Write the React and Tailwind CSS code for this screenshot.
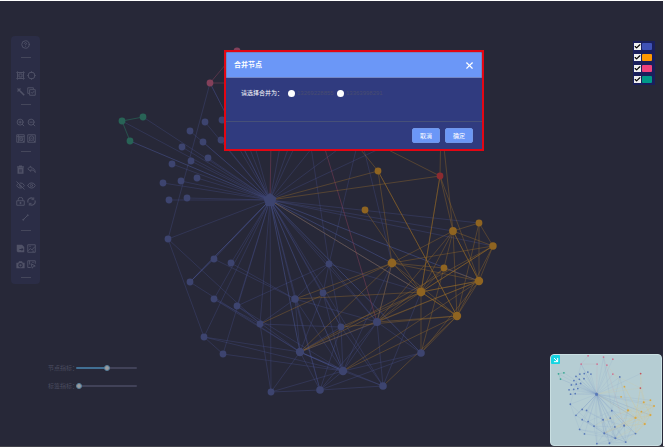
import React from "react";
import {
  CircleHelp, ZoomIn, ZoomOut, EyeOff, Eye, X, ArrowDownRight, Check,
} from "lucide-react";

const NODES = {
  hub: [270, 200, "blue", 6],
  g1: [122, 121, "green"], g2: [143, 117, "green"], g3: [130, 141, "green"],
  p1: [210, 83, "pink"], p2: [237, 51, "pink"], p3: [297, 56, "pink"], p4: [333, 64, "pink"],
  p5: [272, 83, "pink"], p6: [310, 87, "pink"], p7: [333, 122, "pink"],
  b1: [205, 122, "blue"], b2: [222, 120, "blue"], b3: [190, 131, "blue"], b4: [203, 142, "blue"],
  b5: [221, 140, "blue"], b6: [182, 147, "blue"], b7: [191, 161, "blue"], b8: [208, 158, "blue"],
  b9: [172, 164, "blue"], b10: [163, 183, "blue"], b11: [181, 181, "blue"], b12: [197, 178, "blue"],
  b13: [169, 200, "blue"], b14: [187, 198, "blue"], b15: [236, 114, "blue"], b16: [248, 122, "blue"],
  b17: [360, 133, "blue"],
  c1: [168, 239, "blue"], c2: [214, 259, "blue"], c3: [231, 263, "blue"], c4: [190, 282, "blue"],
  c5: [214, 299, "blue"], c6: [237, 306, "blue"], c7: [295, 299, "blue", 3.8], c8: [323, 293, "blue"],
  c9: [329, 264, "blue"], c10: [260, 324, "blue"], c11: [204, 337, "blue"], c12: [223, 354, "blue"],
  c13: [300, 352, "blue", 4.2], c14: [271, 392, "blue"], c15: [320, 390, "blue", 3.8], c16: [341, 327, "blue"],
  c17: [377, 322, "blue", 4], c18: [343, 371, "blue", 4.2], c19: [383, 386, "blue", 3.8], c20: [421, 353, "blue", 3.8],
  o1: [378, 171, "orange"], o2: [365, 210, "orange"], o3: [453, 231, "orange", 3.9], o4: [479, 223, "orange"],
  o5: [493, 246, "orange", 3.7], o6: [392, 263, "orange", 4.4], o7: [444, 268, "orange"], o8: [421, 292, "orange", 4.4],
  o9: [479, 281, "orange", 4.2], o10: [457, 316, "orange", 4.2],
  r1: [440, 176, "red"], r2: [441, 120, "red"],
};

const LINKS = {
  blue: `hub-g1 hub-g2 hub-b1 hub-b2 hub-b3 hub-b4 hub-b5 hub-b6 hub-b7 hub-b8 hub-b9 hub-b10 hub-b11
    hub-b12 hub-b13 hub-b14 hub-b15 hub-b16 hub-b17 hub-p1 hub-p3 hub-p4 hub-p6 hub-p7 hub-c1 hub-c2 hub-c3 hub-c4
    hub-c5 hub-c6 hub-c7 hub-c8 hub-c9 hub-c10 hub-c11 hub-c12 hub-c14 hub-c15 hub-c16 hub-c17
    hub-c19 hub-o4 hub-o3 hub-o5 hub-r2 p1-c1 p1-hub b17-o6 b17-c9 p3-c9 c1-c11 c1-c10 c2-c7 c3-c7 c4-c2 c4-c13
    c5-c10 c6-c9 c6-c13 c6-c18 c10-c7 c10-c16 c10-c14 c11-c13 c11-c18 c11-c12 c12-c18 c7-c13 c7-c17
    c7-c15 c7-c18 c8-c13 c8-c16 c8-c18 c9-c7 c9-c17 c9-c16 c9-o8 c9-c8 c16-c18 c16-c13 c16-c15 c16-c19 c17-c18
    c17-c13 c17-c20 c17-c19 c17-c15 c13-c14 c13-c15 c13-c18 c13-c19 c14-c15 c14-c18 c15-c18 c15-c19
    c15-c20 c18-c19 c18-c20 c19-o8 o6-c17 o6-c18 c5-c13`,
  strong: "hub-g3 hub-o6 hub-o8 hub-o9 hub-c13 hub-c18 hub-c20 c13-c18 hub-c4",
  green: "g1-g2 g1-g3",
  pink: "p1-p2 p1-p5 p5-hub p3-c17",
  orange: `hub-o1 hub-r1 hub-o8 o1-o6 o1-o10 o1-p6 o2-o8 r1-o8 r1-o9 r1-o3 r1-r2 r1-p7 r2-o3 o3-o4 o3-o5
    o3-o6 o3-o7 o3-o8 o3-o9 o3-o10 o3-c17 o4-o5 o4-o9 o4-o10 o5-o6 o5-o8 o5-o9 o5-o10 o5-c13 o6-o7 o6-o8
    o6-o9 o6-o10 o6-c7 o6-c10 o6-c13 o6-c17 o7-o8 o7-c17 o7-c20 o7-o9 o8-o9 o8-o10 o8-c7 o8-c13 o8-c16 o8-c17
    o8-c20 o9-o10 o9-c17 o9-c20 o9-c18 o9-c13 o10-c17 o10-c20 o10-c19 o10-c18 o10-c16`,
  gold: "o5-o8 o9-o8 o3-o9 r1-o8 o8-o10 o1-o10",
};

const DARK = {
  nodes: { blue: "#3d446f", green: "#286356", pink: "#83405a", orange: "#8f6421", red: "#8c2b30" },
  links: { blue: ["#444c84", 0.38], strong: ["#4b5797", 0.5], green: ["#286356", 0.7], pink: ["#83405a", 0.5], orange: ["#94692a", 0.42], gold: ["#a07124", 0.4] },
};
const LIGHT = {
  nodes: { blue: "#5878b8", green: "#35a890", pink: "#cf6f91", orange: "#d9a741", red: "#c4525d" },
  links: { blue: ["#6f8cc0", 0.2], strong: ["#6480bd", 0.35], green: ["#50ad9c", 0.4], pink: ["#c795ad", 0.3], orange: ["#d8c48c", 0.3], gold: ["#d8c07c", 0.35] },
};

function Graph({ palette, viewBox, className, small }) {
  return (
    <svg viewBox={viewBox} className={className} aria-hidden="true">
      {Object.entries(LINKS).map(([kind, list]) => (
        <g key={kind} stroke={palette.links[kind][0]} strokeOpacity={palette.links[kind][1]} strokeWidth={small ? 2 : 1}>
          {list.trim().split(/\s+/).map((pair, i) => {
            const [a, b] = pair.split("-").map((id) => NODES[id]);
            return <line key={i} x1={a[0]} y1={a[1]} x2={b[0]} y2={b[1]} />;
          })}
        </g>
      ))}
      {Object.entries(NODES).map(([id, [x, y, color, r = 3.4]]) =>
        id === "hub" ? (
          <polygon key={id} fill={palette.nodes.blue} points="270,193 276.5,198 274,206 266,206 263.5,198" />
        ) : (
          <circle key={id} cx={x} cy={y} r={r} fill={palette.nodes[color]} />
        )
      )}
    </svg>
  );
}

function Glyph({ children, solid }) {
  return (
    <svg viewBox="0 0 24 24" className="size-[9px]" fill={solid ? "currentColor" : "none"} stroke={solid ? "none" : "currentColor"} strokeWidth="2.5">
      {children}
    </svg>
  );
}
const Frame = () => <Glyph><path d="M4 4h16v16H4zM1 4h3V1M20 1v3h3M1 20h3v3M20 23v-3h3M8 8h8v8H8z" /></Glyph>;
const Ring = () => <Glyph><circle cx="12" cy="12" r="9" /><path d="M12 1v4M12 19v4M1 12h4M19 12h4" /></Glyph>;
const Wand = () => <Glyph><path d="M11 11l11 11" strokeWidth="4" /><path d="M8 3v10M3 8h10M4 4l8 8M12 4L4 12" /></Glyph>;
const CopyCheck = () => <Glyph><path d="M17 6V2H2v15h4M7 7h15v15H7zM11 14l3 3 5-6" /></Glyph>;
const BoxIn = () => <Glyph><path d="M2 2h20v20H2zM2 7h20M7 2v20M17 17l5 5" /><circle cx="13" cy="13" r="5" /><path d="M13 11v4M11 13h4" /></Glyph>;
const BoxOut = () => <Glyph><path d="M2 2h20v20H2zM4 20l4-4M17 17l5 5" /><circle cx="12" cy="11" r="6" /><path d="M9 11h6" /></Glyph>;
const Trash = () => <Glyph solid><path fillRule="evenodd" d="M8 1h8v2h5v4H3V3h5zM4 8h16v15H4zM8 11v9h1.500v-9zM11.300 11v9h1.500v-9zM14.600 11v9h1.500v-9z" /></Glyph>;
const Undo = () => <Glyph><path d="M10 3L2 10l8 7v-4c6 0 9 2 12 7 0-8-5-12-12-13z" /></Glyph>;
const Padlock = () => <Glyph><path d="M2 10h20v12H2zM6 10V6a6 5 0 0112 0v4M12 13v6M9 16h6" /></Glyph>;
const Cycle = () => <Glyph><path d="M3 15A9 9 0 0117 4.500M21 9A9 9 0 017 19.500" strokeWidth="3" /><path d="M18 1v6h-6M6 23v-6h6" /></Glyph>;
const Line = () => <Glyph><path d="M6 18L18 6" /><circle cx="6" cy="18" r="1.500" /><circle cx="18" cy="6" r="1.500" /></Glyph>;
const Export = () => <Glyph solid><path fillRule="evenodd" d="M2 2h14l6 6v14H5l-3-3zM9 13v3h6v3l5-5-5-4v3z" /></Glyph>;
const Picture = () => <Glyph><path d="M2 2h20v20H2zM3 18l6-6 4 4 8-9M6 6h4M14 19h5" /></Glyph>;
const Camera = () => <Glyph solid><path fillRule="evenodd" d="M8 3h8l2 4h5v15H1V7h5zM12 8a6 6 0 100 12 6 6 0 000-12zM12 11a3 3 0 110 6 3 3 0 010-6z" /></Glyph>;
const Pick = () => <Glyph><path d="M10 20H2V2h20v8M7 2v10M11 10l3 12 3-5 5-1zM14 6h4" /></Glyph>;

const TOOLS = [
  [["帮助", CircleHelp]], null,
  [["框选", Frame], ["圈选", Ring]],
  [["魔棒", Wand], ["全选", CopyCheck]], null,
  [["放大", ZoomIn], ["缩小", ZoomOut]],
  [["区域放大", BoxIn], ["区域缩小", BoxOut]], null,
  [["删除", Trash], ["撤销", Undo]],
  [["隐藏", EyeOff], ["显示", Eye]],
  [["锁定", Padlock], ["刷新", Cycle]],
  [["连线", Line]], null,
  [["导出", Export], ["图片", Picture]],
  [["截图", Camera], ["选取", Pick]], null,
];

function Toolbar() {
  return (
    <nav className="h-[248px] w-[29px] rounded-sm bg-[#2b2d46] text-[#505267]">
      {TOOLS.map((row, i) =>
        row ? (
          <div key={i} className="flex h-4 items-center justify-center gap-0.5">
            {row.map(([name, Icon]) => (
              <button key={name} type="button" aria-label={name} className="flex size-[9px] items-center justify-center">
                <Icon className="size-[9px]" strokeWidth={2.5} />
              </button>
            ))}
          </div>
        ) : (
          <div key={i} className="flex h-[15px] justify-center pt-[5px]">
            <span className="h-px w-2.5 bg-[#45475b]" />
          </div>
        )
      )}
    </nav>
  );
}

function Legend() {
  const items = [["蓝色", "bg-[#3f51b5]"], ["橙色", "bg-[#ff9800]"], ["粉色", "bg-[#f0427c]"], ["绿色", "bg-[#009988]"]];
  return (
    <div className="flex flex-col gap-1 bg-[#1a1f5c] py-0.5 pr-[3px] pl-px">
      {items.map(([name, color]) => (
        <label key={name} className="flex items-center gap-px">
          <span className="relative flex">
            <input type="checkbox" defaultChecked aria-label={name} className="peer size-[7px] appearance-none bg-[#eeeeee]" />
            <Check className="pointer-events-none absolute inset-0 hidden size-[7px] text-black peer-checked:block" strokeWidth={4} />
          </span>
          <span className={"h-[7px] w-2.5 rounded-[1px] " + color} />
        </label>
      ))}
    </div>
  );
}

function Slider({ id, label, value }) {
  return (
    <div className="flex h-[18px] items-center">
      <label htmlFor={id} className="w-7 text-[6px] whitespace-nowrap text-[#4b4d60]">{label}</label>
      <input
        id={id}
        type="range"
        defaultValue={value}
        style={{ backgroundImage: `linear-gradient(to right, #416f93 ${value}%, #414258 ${value}%)` }}
        className="h-0.5 w-[61px] appearance-none rounded-full [&::-webkit-slider-thumb]:size-1.5 [&::-webkit-slider-thumb]:appearance-none [&::-webkit-slider-thumb]:rounded-full [&::-webkit-slider-thumb]:border [&::-webkit-slider-thumb]:border-[#557f9c] [&::-webkit-slider-thumb]:bg-[#9c9b9c]"
      />
    </div>
  );
}

function MergeDialog() {
  return (
    <div role="dialog" aria-labelledby="merge-title" className="absolute top-[49px] left-[224px] w-[260px] border-2 border-[#e30613] bg-[#303b7f]">
      <header className="flex h-[26px] items-center justify-between rounded-t-[1px] border border-[#7386c4] bg-[#6b97f7] pr-1.5 pl-[7px] text-white">
        <h1 id="merge-title" className="text-[7px] font-bold">合并节点</h1>
        <button type="button" aria-label="关闭"><X className="size-[11px]" strokeWidth={2.5} /></button>
      </header>
      <fieldset className="flex h-[43px] items-start px-[15px] pt-[11px] text-[6px] leading-[9px]">
        <legend className="float-left w-[47px] text-white">请选择合并为：</legend>
        {["13269228855", "13363998291"].map((n) => (
          <label key={n} className="flex w-[49px] shrink-0 items-center gap-0.5 text-[#484c70]">
            <input type="radio" name="merge" value={n} className="size-[7px] shrink-0 appearance-none rounded-full bg-white checked:border-2 checked:border-[#6b97f7]" />
            {n}
          </label>
        ))}
      </fieldset>
      <footer className="flex justify-end gap-[5px] border-t border-[#465078] px-[9px] pt-1.5 pb-1.5">
        {["取消", "确定"].map((t) => (
          <button key={t} type="button" className="h-[15px] w-7 rounded-[2px] border border-[#7197ea] bg-[#6b97f7] text-[6px] leading-none text-white">{t}</button>
        ))}
      </footer>
    </div>
  );
}

export default function App() {
  return (
    <main className="relative flex min-h-screen flex-col justify-between overflow-hidden border-t border-r-2 border-b border-t-white border-r-white border-b-[#414149] bg-[#272838] font-['Liberation_Sans','Noto_Sans_CJK_SC',sans-serif]">
      <Graph palette={DARK} viewBox="0 1 663 445" className="absolute inset-0 size-full" />
      <div className="relative flex items-start justify-between pt-[35px] pr-2 pl-[11px]">
        <Toolbar />
        <div className="pt-[5px]"><Legend /></div>
      </div>
      <div className="relative flex items-end justify-between pl-12">
        <div className="pb-[51px]">
          <Slider id="node-scale" label="节点指标：" value={50} />
          <Slider id="label-scale" label="标签指标：" value={0} />
        </div>
        <div className="relative mr-px h-[92px] w-28 overflow-hidden rounded-sm border border-[#c9dfe2] bg-[#b5cdd3]">
          <Graph palette={LIGHT} viewBox="93 49 427 347" className="size-full" small />
          <button type="button" aria-label="收起" className="absolute top-0 left-0 flex size-[9px] items-center justify-center rounded-[1px] bg-[#16d5e2] text-white">
            <ArrowDownRight className="size-2" strokeWidth={3} />
          </button>
        </div>
      </div>
      <MergeDialog />
    </main>
  );
}
